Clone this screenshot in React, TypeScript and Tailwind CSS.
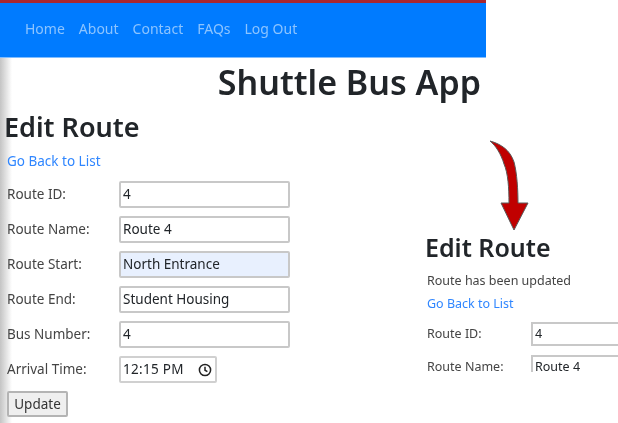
import React from 'react';

const navLinks = ['Home', 'About', 'Contact', 'FAQs', 'Log Out'];

const leftRows = [
	{ label: 'Route ID:', value: '4', autofill: false },
	{ label: 'Route Name:', value: 'Route 4', autofill: false },
	{ label: 'Route Start:', value: 'North Entrance', autofill: true },
	{ label: 'Route End:', value: 'Student Housing', autofill: false },
	{ label: 'Bus Number:', value: '4', autofill: false },
];

const ClockIcon = () => (
	<svg width="14" height="14" viewBox="0 0 14 14" fill="none" stroke="#222" strokeWidth="1.5">
		<circle cx="7" cy="7" r="5.6" />
		<path d="M7 3.8V7.2L9.4 8.6" />
	</svg>
);

const CurvedArrow = () => (
	<svg width="40" height="91" viewBox="0 0 40 91" className="ml-[64px] block">
		<path
			d="M1 1C12 4 21 10 25 22C28 33 29 50 29 63H39L25 90L12 63H20C20 48 19 33 15 24C12 14 7 6 1 1Z"
			fill="#c00000"
			stroke="#5a5a5a"
			strokeWidth="1"
		/>
	</svg>
);

const App: React.FC = () => {
	return (
		<div className="w-[618px] h-[423px] overflow-hidden bg-white font-['Noto_Sans',sans-serif] text-[#212529] blur-[0.4px]">
			<div className="w-[486px] h-[58px] bg-[#007bff] border-t-[3px] border-t-[#a92730] border-b border-b-[#80bdff] flex items-center gap-[14px] pl-[25px] pb-[3px] text-[14px] text-[#8cc4ff]">
				{navLinks.map((link) => (
					<a key={link} href="#">{link}</a>
				))}
			</div>

			<div className="flex h-[365px] bg-[linear-gradient(to_right,#c4c4c4_0px,#ffffff_12px)]">
				<div className="w-[425px] flex-shrink-0">
					<h1 className="w-[481px] h-[51px] text-right text-[34px] leading-[48px] font-semibold">Shuttle Bus App</h1>
					<h2 className="h-[36px] pl-1 text-[27px] leading-[36px] font-semibold">Edit Route</h2>
					<a href="#" className="block mt-[6px] h-[20px] pl-[7px] text-[13.5px] leading-[20px] text-[#2f86ff]">Go Back to List</a>
					<div className="mt-[10px] flex flex-col gap-[8px] pl-[7px]">
						{leftRows.map((row) => (
							<div key={row.label} className="flex items-center h-[27px] text-[13.5px]">
								<label className="w-[112px] text-[#444]">{row.label}</label>
								<div className={`w-[171px] h-[27px] pl-[2px] border-2 border-[#c8c8c8] rounded-[2px] flex items-center ${row.autofill ? 'bg-[#e8f0fe]' : 'bg-white'}`}>
									{row.value}
								</div>
							</div>
						))}
						<div className="flex items-center h-[27px] text-[13.5px]">
							<label className="w-[112px] text-[#444]">Arrival Time:</label>
							<div className="w-[98px] h-[27px] pl-[2px] pr-[3px] border-2 border-[#d0d0d0] rounded-[2px] flex items-center justify-between">
								<span className="tracking-[0.3px]">12:15 PM</span>
								<ClockIcon />
							</div>
						</div>
					</div>
					<button className="mt-[8px] ml-[7px] w-[61px] h-[26px] bg-[#efefef] border-2 border-[#b4b4b4] rounded-[2px] text-[13.5px] text-[#333]">Update</button>
				</div>

				<div className="flex-1 h-[314px] overflow-hidden pt-[82px]">
					<CurvedArrow />
					<h2 className="text-[25px] leading-[32px] font-semibold">Edit Route</h2>
					<p className="mt-[9px] pl-[2px] text-[12.5px] leading-[18px] text-[#444]">Route has been updated</p>
					<a href="#" className="block mt-[5px] pl-[2px] text-[12.5px] leading-[18px] text-[#2f86ff]">Go Back to List</a>
					<div className="mt-[9px] flex flex-col gap-[9px] pl-[2px]">
						<div className="flex items-center h-[24px] text-[12.5px]">
							<label className="w-[104px] flex-shrink-0 text-[#444]">Route ID:</label>
							<div className="flex-1 h-[24px] pl-[2px] border-2 border-r-0 border-[#c8c8c8] flex items-center">4</div>
						</div>
						<div className="flex items-center h-[24px] text-[12.5px]">
							<label className="w-[104px] flex-shrink-0 text-[#444]">Route Name:</label>
							<div className="flex-1 h-[24px] pl-[2px] border-2 border-r-0 border-[#c8c8c8] flex items-center">Route 4</div>
						</div>
					</div>
				</div>
			</div>
		</div>
	);
};

export default App;
